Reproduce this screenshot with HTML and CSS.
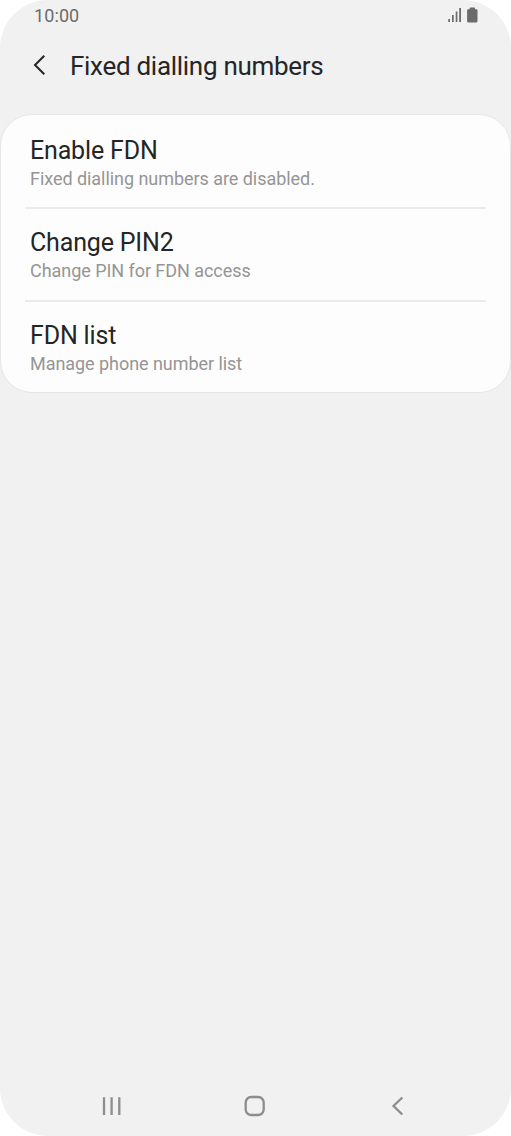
FILE: index.html
```html
<!DOCTYPE html>
<html lang="en">
<head>
<meta charset="utf-8">
<title>Fixed dialling numbers</title>
<link rel="stylesheet" href="styles.css">
</head>
<body>
<div class="screen">
  <div class="status">
    <span class="time">10:00</span>
    <svg class="status-icons" width="32" height="18" viewBox="0 0 32 18">
      <path d="M1.300 11v3h1.700v-3zM5 7v7h1.700V7zM8.700 3.500v10.500h1.700V3.500zM12.200 0v14h1.800V0z"/>
      <path d="M23.300 -.5h4q.7 0 .7.800V1.200h1.300q1.200 0 1.200 1.200v10.600q0 1.500-1.500 1.500h-7.400q-1.500 0-1.500-1.500V2.400q0-1.200 1.200-1.200h1.300V.3q0-.8.7-.8z"/>
    </svg>
  </div>
  <header class="header">
    <svg class="back" width="14" height="22" viewBox="0 0 14 22"><path d="M11.300 1.800 2 11l9.300 9.200"/></svg>
    <h1 class="title">Fixed dialling numbers</h1>
  </header>
  <main class="card">
    <section class="row">
      <div class="name">Enable FDN</div>
      <div class="note">Fixed dialling numbers are disabled.</div>
    </section>
    <section class="row">
      <div class="name">Change PIN2</div>
      <div class="note">Change PIN for FDN access</div>
    </section>
    <section class="row">
      <div class="name">FDN list</div>
      <div class="note">Manage phone number list</div>
    </section>
  </main>
  <nav class="nav">
    <svg width="22" height="22" viewBox="0 0 22 22"><path d="M4 2.200v17.800M11.600 2.200v17.800M19.300 2.200v17.800"/></svg>
    <svg width="22" height="22" viewBox="0 0 22 22"><rect x="1.700" y="2" width="18" height="18" rx="5.500"/></svg>
    <svg width="22" height="22" viewBox="0 0 22 22"><path d="M15.300 2.500 6.500 11l8.800 8.500"/></svg>
  </nav>
</div>
</body>
</html>
```
FILE: styles.css
```css
* { box-sizing: border-box; }
body {
  margin: 0;
  background: #fff;
  font-family: Roboto, sans-serif;
}
.screen {
  display: flex;
  flex-direction: column;
  height: 1136px;
  background: #f1f1f1;
  border-radius: 48px;
  overflow: hidden;
}
.status {
  display: flex;
  justify-content: space-between;
  align-items: flex-start;
  height: 36px;
  padding: 5px 32px 0 34px;
  color: #6b6b6b;
}
.time { font-size: 18px; line-height: 22px; letter-spacing: 0.1px; }
.status-icons { margin-top: 3px; fill: #6b6b6b; overflow: visible; }
.header {
  display: flex;
  align-items: center;
  height: 60px;
  gap: 23px;
  padding-left: 33px;
}
.back { fill: none; stroke: #252525; stroke-width: 2; margin-top: -2px; }
.title {
  margin: 0;
  font-size: 26px;
  font-weight: 400;
  line-height: 32px;
  letter-spacing: -0.29px;
  color: #252525;
}
.card {
  height: 279px;
  margin-top: 18px;
  padding: 0 24px;
  background: #fdfdfd;
  border: 1px solid #e6e6e6;
  border-radius: 32px;
}
.row {
  height: 92px;
  padding: 20px 5px 0;
}
.row + .row {
  height: 93px;
  border-top: 2px solid #ebebeb;
  padding-top: 18px;
}
.name {
  font-size: 25px;
  line-height: 32px;
  letter-spacing: -0.17px;
  color: #252525;
}
.note {
  margin-top: 1px;
  font-size: 18px;
  line-height: 22px;
  letter-spacing: -0.05px;
  color: #959595;
}
.nav {
  display: flex;
  justify-content: space-between;
  margin-top: auto;
  padding: 0 102px 19px 100px;
}
.nav svg { fill: none; stroke: #8d8d8d; stroke-width: 2.3; }
```
